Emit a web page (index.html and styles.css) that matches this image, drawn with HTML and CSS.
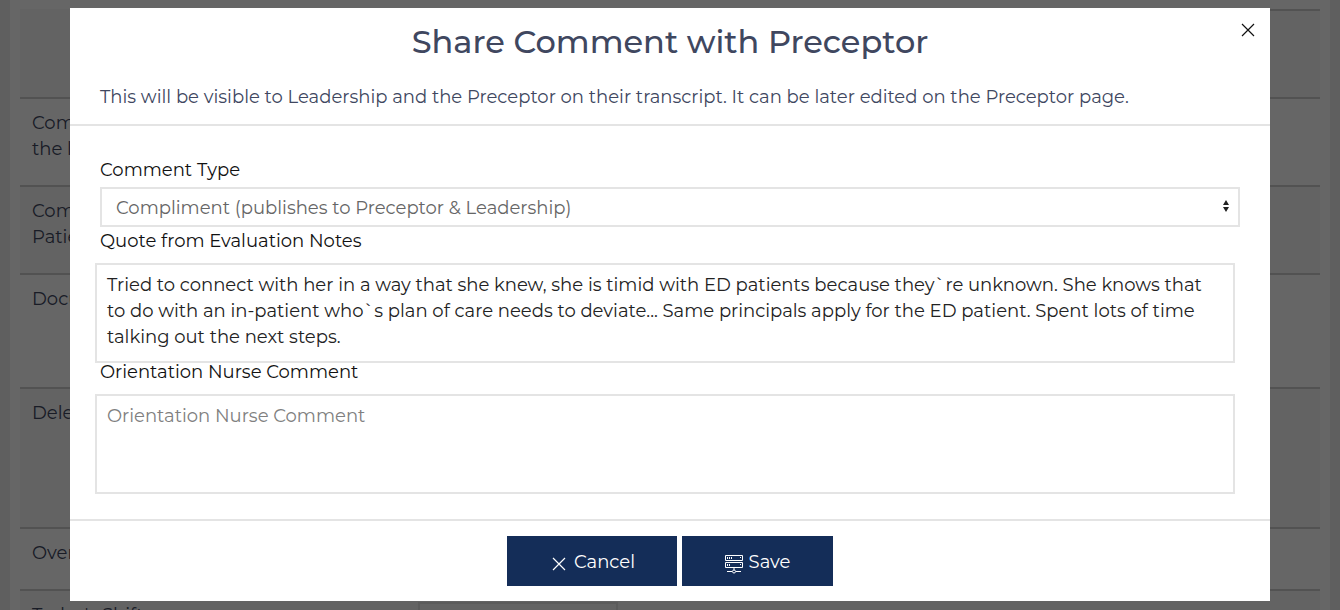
FILE: index.html
```html
<!DOCTYPE html>
<html lang="en">

<head>
  <meta charset="UTF-8">
  <meta name="viewport" content="width=device-width, initial-scale=1.0">
  <title>Share Comment with Preceptor</title>
  <link rel="stylesheet" href="styles.css">
</head>

<body>

  <div class="page">
    <table class="evaluation">
      <tbody>
        <tr class="lines-2">
          <td class="blank"></td>
          <td></td>
        </tr>
        <tr class="lines-2">
          <td>Com<br>the l</td>
          <td></td>
        </tr>
        <tr class="lines-2">
          <td>Com<br>Patie</td>
          <td></td>
        </tr>
        <tr class="lines-3">
          <td>Docu</td>
          <td></td>
        </tr>
        <tr class="lines-4">
          <td>Dele</td>
          <td></td>
        </tr>
        <tr class="lines-1">
          <td>Over</td>
          <td></td>
        </tr>
        <tr class="lines-1">
          <td><label for="shift">Today's Shift</label></td>
          <td><input type="text" id="shift" class="shift"></td>
        </tr>
      </tbody>
    </table>
  </div>

  <div class="overlay">
    <form class="modal" role="dialog" aria-labelledby="modalTitle">
      <div class="modal-header">
        <h1 id="modalTitle">Share Comment with Preceptor</h1>
        <p>This will be visible to Leadership and the Preceptor on their transcript. It can be later edited on the Preceptor page.</p>
        <button type="button" class="close" aria-label="Close">
          <svg width="14" height="14" viewBox="0 0 14 14"><path d="M1 1l12 12M13 1L1 13" /></svg>
        </button>
      </div>

      <div class="modal-body">
        <label for="commentType">Comment Type</label>
        <div class="select-wrap">
          <select id="commentType">
            <option>Compliment (publishes to Preceptor &amp; Leadership)</option>
          </select>
          <svg class="arrows" width="6" height="12" viewBox="0 0 6 12"><path d="M3 0l3 5H0zM3 12L0 7h6z" /></svg>
        </div>

        <label for="quote">Quote from Evaluation Notes</label>
        <textarea id="quote">Tried to connect with her in a way that she knew, she is timid with ED patients because they`re unknown. She knows that to do with an in-patient who`s plan of care needs to deviate... Same principals apply for the ED patient. Spent lots of time talking out the next steps.</textarea>

        <label for="nurseComment">Orientation Nurse Comment</label>
        <textarea id="nurseComment" placeholder="Orientation Nurse Comment"></textarea>
      </div>

      <div class="modal-footer">
        <button type="button" class="btn btn-cancel">
          <svg width="14" height="14" viewBox="0 0 14 14"><path d="M1 1l12 12M13 1L1 13" /></svg>
          Cancel
        </button>
        <button type="submit" class="btn btn-save">
          <svg width="18" height="19" viewBox="0 0 18 19">
            <path d="M.5 .5h17v5H.5zM.5 7.500h17v5H.5zM9 13v2M2 16.500h5M11 16.500h5" />
            <path d="M2.500 2v2M4.500 2v2M6.500 2v2M15.500 2v1M2.500 9v2M4.500 9v2M15.500 9v1" />
            <circle cx="9" cy="16.500" r="1.500" />
          </svg>
          Save
        </button>
      </div>
    </form>
  </div>

</body>

</html>
```
FILE: styles.css
```css
* {
  box-sizing: border-box;
}

html,
body {
  height: 100%;
  margin: 0;
  overflow: hidden;
}

body {
  background-color: #eee;
  color: #40475f;
}

body,
button,
select,
textarea {
  font-family: Montserrat, Inter, "Open Sans", sans-serif;
  font-size: 18px;
  font-weight: 400;
  line-height: 26px;
}

/* evaluation table behind the modal */
.page {
  height: 100%;
  margin: 0 10px;
  padding: 9px 10px 0;
  background-color: #fff;
  overflow: hidden;
}

.evaluation {
  width: 100%;
  border-collapse: separate;
  border-spacing: 0;
  table-layout: fixed;
}

.evaluation td {
  padding: 11px 12px;
  border-top: 2px solid #ccc;
  vertical-align: top;
}

.evaluation td:first-child {
  width: 386px;
}

.evaluation td.blank {
  border-top-color: transparent;
}

.evaluation tr:nth-child(odd) {
  background-color: #f7f7f7;
}

.lines-1 {
  height: 62px;
}

.lines-2 {
  height: 88px;
}

.lines-3 {
  height: 114px;
}

.lines-4 {
  height: 140px;
}

.shift {
  display: block;
  width: 200px;
  height: 38px;
  border: 2px solid #e4e4e4;
  background-color: transparent;
}

/* modal */
.overlay {
  position: fixed;
  inset: 0;
  padding: 8px 70px;
  background-color: rgba(0, 0, 0, 0.6);
}

.modal {
  position: relative;
  background-color: #fff;
}

.modal-header {
  padding: 14px 30px;
  border-bottom: 2px solid #e4e4e4;
}

h1 {
  margin: 0 0 22px;
  font-size: 32px;
  font-weight: 500;
  line-height: 40px;
  text-align: center;
}

p {
  margin: 0;
}

.close {
  position: absolute;
  top: 15px;
  right: 15px;
  display: flex;
  padding: 0;
  border: none;
  background: none;
  cursor: pointer;
}

.close svg {
  stroke: #111;
  stroke-width: 1.2;
}

.modal-body {
  padding: 35px 30px 25px;
}

.modal-body label {
  display: block;
  margin-bottom: 13px;
  color: #111;
  line-height: 18px;
}

.modal-body label:first-child {
  margin-bottom: 8px;
}

.select-wrap {
  position: relative;
  margin-bottom: 5px;
}

select {
  display: block;
  width: 100%;
  height: 40px;
  padding: 2px 14px 0;
  border: 2px solid #e4e4e4;
  border-radius: 0;
  background-color: #fff;
  color: #666;
  appearance: none;
}

.arrows {
  position: absolute;
  top: 13px;
  right: 11px;
  fill: #222;
  pointer-events: none;
}

textarea {
  display: block;
  width: 100%;
  height: 100px;
  margin-left: -5px;
  padding: 7px 10px;
  border: 2px solid #e4e4e4;
  background-color: #fff;
  color: #222;
  resize: none;
}

textarea::placeholder {
  color: #808080;
}

.modal-footer {
  display: flex;
  justify-content: center;
  gap: 5px;
  padding: 15px;
  border-top: 2px solid #e4e4e4;
}

.btn {
  display: flex;
  align-items: center;
  justify-content: center;
  gap: 6px;
  height: 50px;
  padding: 2px 0 0;
  border: none;
  background-color: #142d58;
  color: #fff;
  cursor: pointer;
}

.btn svg {
  margin-top: 4px;
  fill: none;
  stroke: #fff;
}

.btn-cancel {
  gap: 8px;
  width: 170px;
  padding-left: 3px;
}

.btn-cancel svg {
  stroke-width: 1.2;
}

.btn-save {
  width: 151px;
}
```
